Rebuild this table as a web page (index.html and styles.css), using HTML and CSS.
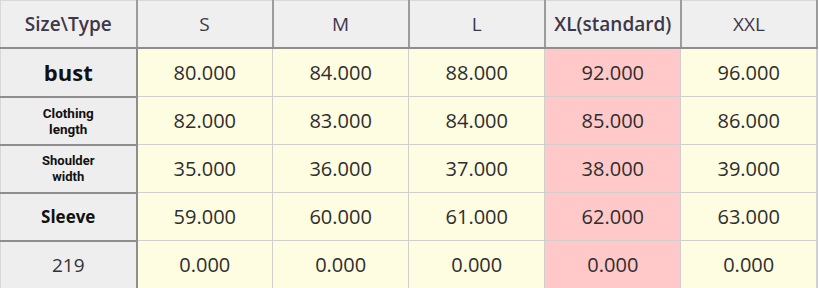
FILE: index.html
```html
<!DOCTYPE html>
<html lang="en">
<head>
    <meta charset="UTF-8">
    <title>Size chart</title>
    <link rel="stylesheet" href="styles.css">
</head>
<body>

    <table class="sizes">
        <colgroup>
            <col class="c-head">
            <col><col><col><col><col>
        </colgroup>
        <thead>
            <tr>
                <th class="corner">Size\Type</th>
                <th>S</th>
                <th>M</th>
                <th>L</th>
                <th class="std">XL(standard)</th>
                <th>XXL</th>
            </tr>
        </thead>
        <tbody>
            <tr>
                <th class="rh rh-big">bust</th>
                <td>80.000</td><td>84.000</td><td>88.000</td><td class="hl">92.000</td><td>96.000</td>
            </tr>
            <tr>
                <th class="rh rh-small">Clothing<br>length</th>
                <td>82.000</td><td>83.000</td><td>84.000</td><td class="hl">85.000</td><td>86.000</td>
            </tr>
            <tr>
                <th class="rh rh-tiny">Shoulder<br>width</th>
                <td>35.000</td><td>36.000</td><td>37.000</td><td class="hl">38.000</td><td>39.000</td>
            </tr>
            <tr>
                <th class="rh rh-mid">Sleeve</th>
                <td>59.000</td><td>60.000</td><td>61.000</td><td class="hl">62.000</td><td>63.000</td>
            </tr>
            <tr>
                <th class="rh rh-plain">219</th>
                <td>0.000</td><td>0.000</td><td>0.000</td><td class="hl">0.000</td><td>0.000</td>
            </tr>
        </tbody>
    </table>

</body>
</html>
```

FILE: styles.css
```css
body {
    margin: 0;
    background: #fff;
    font-family: "Open Sans", "Noto Sans", sans-serif;
}
.sizes {
    width: 818px;
    border-collapse: collapse;
    table-layout: fixed;
}
.c-head {
    width: 136px;
}
.sizes th,
.sizes td {
    padding: 0;
    text-align: center;
    vertical-align: middle;
}
thead th {
    height: 46px;
    background-color: #efefef;
    color: #3d3748;
    font-size: 19px;
    font-weight: normal;
    border-right: 2px solid #9c9c9c;
    border-bottom: 2px solid #8e8e8e;
    border-top: 1px solid #d8d8d8;
}
thead th.corner,
thead th.std {
    font-weight: 600;
}
thead th.corner {
    border-left: 1px solid #d8d8d8;
}
tbody td {
    height: 47px;
    background-color: #fefde2;
    color: #2e2e2e;
    font-size: 20px;
    border: 1px solid #cfcfcf;
}
tbody td.hl {
    background-color: #ffc9c9;
}
tbody td:last-child {
    border-right: 2px solid #d0d0d0;
}
.rh {
    background-color: #eeeeee;
    color: #111;
    font-weight: bold;
    border-right: 2px solid #8e8e8e;
    border-bottom: 2px solid #8e8e8e;
    border-left: 1px solid #d8d8d8;
}
.rh-big {
    font-size: 22px;
}
.rh-small,
.rh-tiny {
    font-family: Roboto, "Open Sans", sans-serif;
    line-height: 16px;
}
.rh-small {
    font-size: 13.5px;
}
.rh-tiny {
    font-size: 13px;
}
.rh-mid {
    font-size: 17px;
}
.rh-plain {
    font-size: 19px;
    font-weight: normal;
    color: #333;
}
```
